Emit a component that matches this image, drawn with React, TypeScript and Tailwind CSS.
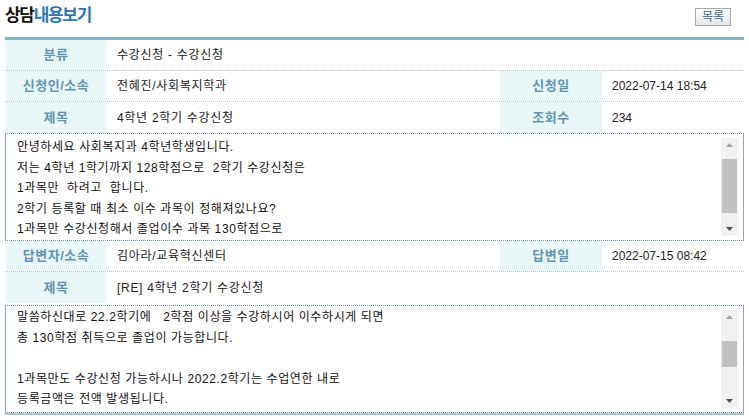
import React from 'react';

const font = 'font-["Liberation_Sans","Noto_Sans_CJK_KR",sans-serif]';

const Label: React.FC<{ children: React.ReactNode }> = ({ children }) => (
  <div className="w-[102px] shrink-0 bg-[#e9f6f7] flex items-center justify-center text-[13px] font-bold text-[#5f95b4] tracking-[0.5px]">
    {children}
  </div>
);

const Value: React.FC<{ children: React.ReactNode; grow?: boolean }> = ({ children, grow }) => (
  <div
    className={`${grow ? 'flex-1 tracking-[0.7px]' : 'w-[142px]'} flex items-center pl-[10px] text-[12px] text-[#222]`}
  >
    {children}
  </div>
);

const Row: React.FC<{ children: React.ReactNode; last?: boolean }> = ({ children, last }) => (
  <div className={`flex h-[31px] ${last ? '' : 'border-b border-dotted border-[#b3c3cb]'}`}>{children}</div>
);

const ScrollBar: React.FC<{ thumbTop: number; thumbHeight: number }> = ({ thumbTop, thumbHeight }) => (
  <div className="w-[17px] h-full bg-[#f1f1f1] flex flex-col items-center relative">
    <div className="h-[14px] flex items-center justify-center">
      <svg width="7" height="4" viewBox="0 0 7 4">
        <path d="M0 4 L3.5 0 L7 4 Z" fill="#a3a3a3" />
      </svg>
    </div>
    <div className="absolute left-[1px] right-[1px] bg-[#c1c1c1]" style={{ top: thumbTop, height: thumbHeight }} />
    <div className="flex-1" />
    <div className="h-[14px] flex items-center justify-center">
      <svg width="7" height="4" viewBox="0 0 7 4">
        <path d="M0 0 L3.5 4 L7 0 Z" fill="#505050" />
      </svg>
    </div>
  </div>
);

const TextBox: React.FC<{ lines: string[]; thumbTop: number; thumbHeight: number; padTop: number }> = ({
  lines,
  thumbTop,
  thumbHeight,
  padTop,
}) => (
  <div className="h-[108px] border-y border-dotted border-[#6d93a8]">
    <div className="h-full border-x border-[#86a8bb] flex">
      <div
        className="flex-1 pl-[11px] overflow-hidden text-[12px] leading-[20.5px] tracking-[0.6px] text-[#111]"
        style={{ paddingTop: padTop }}
      >
        {lines.map((l, i) => (
          <div key={i} className="whitespace-pre h-[20.5px]">
            {l}
          </div>
        ))}
      </div>
      <div className="py-[4px] pr-[5px] h-full">
        <ScrollBar thumbTop={thumbTop} thumbHeight={thumbHeight} />
      </div>
    </div>
  </div>
);

export default function App() {
  return (
    <div className={`w-[749px] h-[420px] bg-white overflow-hidden ${font}`}>
      <div className="flex justify-between items-start pl-[5px] pr-[18px] pt-[6px] h-[37px]">
        <h1 className="text-[17px] font-bold tracking-[-1.3px] leading-[20px]">
          <span className="text-[#111]">상담</span>
          <span className="text-[#2b78b5]">내용보기</span>
        </h1>
        <button className="mt-[2px] w-[36px] h-[18px] border border-[#a9a9a9] bg-gradient-to-b from-white to-[#e4e4e4] text-[12px] leading-[16px] text-[#44698c]">
          목록
        </button>
      </div>

      <div className="mx-[5px] w-[739px] border-t-[3px] border-[#82b6c9]">
        <Row>
          <Label>분류</Label>
          <Value grow>수강신청 - 수강신청</Value>
        </Row>
        <Row>
          <Label>신청인/소속</Label>
          <Value grow>전혜진/사회복지학과</Value>
          <Label>신청일</Label>
          <Value>2022-07-14 18:54</Value>
        </Row>
        <Row last>
          <Label>제목</Label>
          <Value grow>4학년 2학기 수강신청</Value>
          <Label>조회수</Label>
          <Value>234</Value>
        </Row>
        <TextBox
          padTop={3}
          thumbTop={21}
          thumbHeight={54}
          lines={[
            '안녕하세요 사회복지과 4학년학생입니다.',
            '저는 4학년 1학기까지 128학점으로  2학기 수강신청은',
            '1과목만  하려고  합니다.',
            '2학기 등록할 때 최소 이수 과목이 정해져있나요?',
            '1과목만 수강신청해서 졸업이수 과목 130학점으로',
          ]}
        />
        <Row>
          <Label>답변자/소속</Label>
          <Value grow>김아라/교육혁신센터</Value>
          <Label>답변일</Label>
          <Value>2022-07-15 08:42</Value>
        </Row>
        <Row last>
          <Label>제목</Label>
          <Value grow>[RE] 4학년 2학기 수강신청</Value>
        </Row>
        <div className="h-[2px]" />
        <TextBox
          padTop={1}
          thumbTop={31}
          thumbHeight={26}
          lines={[
            '말씀하신대로 22.2학기에   2학점 이상을 수강하시어 이수하시게 되면',
            '총 130학점 취득으로 졸업이 가능합니다.',
            '',
            '1과목만도 수강신청 가능하시나 2022.2학기는 수업연한 내로',
            '등록금액은 전액 발생됩니다.',
          ]}
        />
        <div className="h-[2px] bg-[#a9c6d3]" />
      </div>
    </div>
  );
}
